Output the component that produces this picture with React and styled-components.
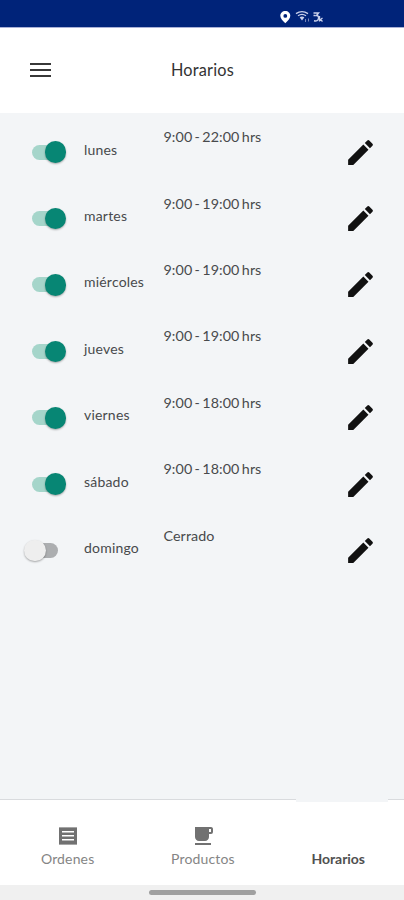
import React, {useState} from 'react'
import styled, {createGlobalStyle} from 'styled-components'
import {MdEdit} from 'react-icons/md'

const GlobalStyle = createGlobalStyle`
    * {
        box-sizing: border-box;
    }

    body {
        margin: 0;
        font-family: Lato, sans-serif;
        background: #f3f5f7;
    }

    button {
        padding: 0;
        border: 0;
        background: none;
        font-family: inherit;
        cursor: pointer;
    }
`
const Screen = styled.div`
    display: flex;
    flex-direction: column;
    width: 100%;
    height: 900px;
    overflow: hidden;
    background: #f3f5f7;
`
const StatusBar = styled.div`
    display: flex;
    align-items: flex-start;
    flex: none;
    height: 28px;
    padding: 10px 0 0 278px;
    background: #002379;
    border-bottom: 1px solid #a9b0d6;
    color: #fff;
`
const PinIcon = styled.svg`
    display: block;
    width: 14px;
    height: 14px;
    fill: #fff;
`
const StatusIcons = styled.svg`
    display: block;
    width: 30px;
    height: 14px;
    margin-left: 3px;
`
const Header = styled.header`
    display: grid;
    grid-template-columns: 1fr auto 1fr;
    align-items: center;
    flex: none;
    height: 85px;
    padding: 0 29px 0 30px;
    background: #fff;
`
const MenuButton = styled.button`
    display: flex;
    flex-direction: column;
    justify-content: space-between;
    width: 22px;
    height: 14px;
    margin-top: -1px;
`
const MenuLine = styled.span`
    display: block;
    width: 21px;
    height: 2px;
    background: #383838;
`
const Title = styled.h1`
    margin: -2px 0 0;
    font-size: 16.3px;
    line-height: 20px;
    font-weight: 400;
    letter-spacing: .2px;
    color: #333;
`
const List = styled.main`
    flex: 1;
    padding-top: 6px;
`
const Row = styled.div`
    display: grid;
    grid-template-columns: 60px 79.5px 1fr 33px;
    align-items: center;
    height: 66.4px;
    padding: 0 27px 0 24px;
`
const Switch = styled.button`
    display: flex;
    align-items: center;
    width: 42px;
    height: 24px;
    padding-left: ${({$on}) => $on ? '8px' : '7px'};
`
const Track = styled.span`
    display: flex;
    align-items: center;
    width: 27px;
    height: 15px;
    border-radius: 8px;
    background: ${({$on}) => $on ? '#a5d5ca' : '#acaeb0'};
`
const Thumb = styled.span`
    flex: none;
    width: 21.5px;
    height: 21.5px;
    margin-left: ${({$on}) => $on ? '12.5px' : '-7px'};
    border-radius: 50%;
    background: ${({$on}) => $on ? '#078674' : '#eeeeee'};
    box-shadow: 0 1px 2px rgba(0, 0, 0, .32);
`
const Day = styled.span`
    padding-bottom: 5px;
    font-size: 14px;
    line-height: 18px;
    letter-spacing: .2px;
    color: #484a4c;
`
const Hours = styled.span`
    padding-bottom: 30px;
    font-size: 14.3px;
    line-height: 18px;
    letter-spacing: .08px;
    word-spacing: -1.4px;
    color: #484a4c;
`
const EditButton = styled.button`
    display: flex;
    color: #111;
`
const TabBar = styled.nav`
    display: flex;
    flex: none;
    height: 86px;
    background: #fff;
    border-top: 1px solid #d9dbde;
`
const Tab = styled.button`
    position: relative;
    display: flex;
    flex-direction: column;
    align-items: center;
    flex: none;
    width: 135.3px;
    padding-top: 24px;
    font-size: 14px;
    line-height: 18px;
    letter-spacing: ${({$active}) => $active ? '-.05px' : '.15px'};
    font-weight: ${({$active}) => $active ? 700 : 400};
    color: ${({$active}) => $active ? '#505050' : '#858585'};
`
const TabIcon = styled.svg`
    display: block;
    width: 24px;
    height: 24px;
    margin-bottom: 2px;
    fill: #717171;
`
const TabMark = styled.span`
    position: absolute;
    top: -1px;
    left: 25.4px;
    width: 92px;
    height: 3px;
    background: #f3f5f7;
`
const HomeArea = styled.div`
    display: flex;
    justify-content: center;
    flex: none;
    height: 15px;
    padding: 5px 0 0 1px;
    background: #f0f0f0;
`
const HomeHandle = styled.div`
    width: 107px;
    height: 5px;
    border-radius: 3px;
    background: #a0a0a0;
`

const schedule = [
    {day: 'lunes', hours: '9:00 - 22:00 hrs', open: true},
    {day: 'martes', hours: '9:00 - 19:00 hrs', open: true},
    {day: 'miércoles', hours: '9:00 - 19:00 hrs', open: true},
    {day: 'jueves', hours: '9:00 - 19:00 hrs', open: true},
    {day: 'viernes', hours: '9:00 - 18:00 hrs', open: true},
    {day: 'sábado', hours: '9:00 - 18:00 hrs', open: true},
    {day: 'domingo', hours: 'Cerrado', open: false},
]

const ScheduleRow = ({day, hours, open}) => {
    const [on, setOn] = useState(open)

    return (
        <Row>
            <Switch $on={on} role='switch' aria-checked={on} aria-label={day} onClick={() => setOn(prev => !prev)}>
                <Track $on={on}>
                    <Thumb $on={on}/>
                </Track>
            </Switch>
            <Day>{day}</Day>
            <Hours>{hours}</Hours>
            <EditButton aria-label='Editar'>
                <MdEdit size={33}/>
            </EditButton>
        </Row>
    )
}

export default function App() {
    return (
        <>
            <GlobalStyle/>
            <Screen>
                <StatusBar>
                    <PinIcon viewBox='0 0 14 14'>
                        <path fillRule='evenodd' d='M7.300 1C4.500 1 2.300 3.100 2.300 5.800c0 3 2.700 5 5 7.400 2.300-2.400 5-4.400 5-7.400C12.300 3.100 10.100 1 7.300 1Zm0 3a1.900 1.900 0 1 1 0 3.800 1.900 1.900 0 0 1 0-3.800Z'/>
                    </PinIcon>
                    {/* wifi, data arrows and signal */}
                    <StatusIcons viewBox='0 0 30 14' fill='none' stroke='#c9d0ea'>
                        <path d='M1 3.600Q7 -.4 13 3.600' strokeWidth='1.400'/>
                        <path d='M3 5.800Q7 3 11 5.800' strokeWidth='1.300'/>
                        <path d='M4.600 7.200Q7 5.800 9.400 7.200L7 10.600Z' fill='#c9d0ea' stroke='none'/>
                        <path d='M10.500 9v3M13.500 8.500v3' stroke='#7583b8'/>
                        <path d='M18.500 3h5l-2 2.600q2.600 0 2 3t-4.500 2.200M18.500 5.600h2' strokeWidth='1.500'/>
                        <path d='M24.500 6v5.500M27.500 8l-2 1.500 2 2' strokeWidth='1.300'/>
                    </StatusIcons>
                </StatusBar>

                <Header>
                    <MenuButton aria-label='Menu'>
                        <MenuLine/>
                        <MenuLine/>
                        <MenuLine/>
                    </MenuButton>
                    <Title>Horarios</Title>
                </Header>

                <List>
                    {schedule.map(item => <ScheduleRow key={item.day} {...item}/>)}
                </List>

                <TabBar>
                    <Tab>
                        <TabIcon viewBox='0 0 24 24'>
                            <path fillRule='evenodd' d='M3 3l1 .8L5 3l1 .8L7 3l1 .8L9 3l1 .8 1-.8 1 .8 1-.8 1 .8 1-.8 1 .8 1-.8 1 .8 1-.8 1 .8 1-.8v18l-1-.8-1 .8-1-.8-1 .8-1-.8-1 .8-1-.8-1 .8-1-.8-1 .8-1-.8-1 .8-1-.8-1 .8-1-.8-1 .8-1-.8-1 .8ZM6 7v1.600h12V7ZM6 11v1.600h12V11ZM6 15v1.600h12V15Z'/>
                        </TabIcon>
                        Ordenes
                    </Tab>
                    <Tab>
                        <TabIcon viewBox='0 0 24 24'>
                            <path d='M20 3H4v10c0 2.210 1.790 4 4 4h6c2.210 0 4-1.790 4-4v-3h2a2 2 0 0 0 2-2V5c0-1.110-.890-2-2-2zm0 5h-2V5h2v3zM4 19h16v2H4z'/>
                        </TabIcon>
                        Productos
                    </Tab>
                    <Tab $active>
                        <TabMark/>
                        <TabIcon as='span'/>
                        Horarios
                    </Tab>
                </TabBar>

                <HomeArea>
                    <HomeHandle/>
                </HomeArea>
            </Screen>
        </>
    )
}
